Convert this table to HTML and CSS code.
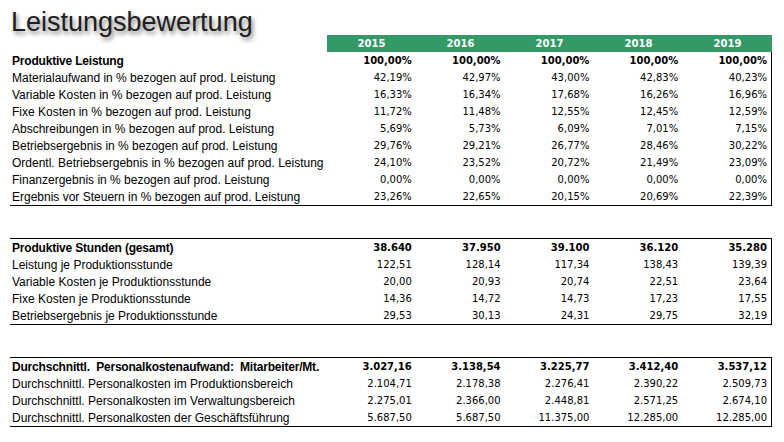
FILE: index.html
```html
<!DOCTYPE html>
<html lang="de">
<head>
<meta charset="utf-8">
<title>Leistungsbewertung</title>
<link rel="stylesheet" href="styles.css">
</head>
<body>
<h1 class="title">Leistungsbewertung</h1>
<div class="sheet">
  <div class="row head">
    <div class="lbl"></div>
    <div class="yr">2015</div><div class="yr">2016</div><div class="yr">2017</div><div class="yr">2018</div><div class="yr">2019</div>
  </div>
  <div class="block">
    <div class="row strong"><div class="lbl">Produktive Leistung</div><div class="num">100,00%</div><div class="num">100,00%</div><div class="num">100,00%</div><div class="num">100,00%</div><div class="num">100,00%</div></div>
    <div class="row"><div class="lbl">Materialaufwand in % bezogen auf prod. Leistung</div><div class="num">42,19%</div><div class="num">42,97%</div><div class="num">43,00%</div><div class="num">42,83%</div><div class="num">40,23%</div></div>
    <div class="row"><div class="lbl">Variable Kosten in % bezogen auf prod. Leistung</div><div class="num">16,33%</div><div class="num">16,34%</div><div class="num">17,68%</div><div class="num">16,26%</div><div class="num">16,96%</div></div>
    <div class="row"><div class="lbl">Fixe Kosten in % bezogen auf prod. Leistung</div><div class="num">11,72%</div><div class="num">11,48%</div><div class="num">12,55%</div><div class="num">12,45%</div><div class="num">12,59%</div></div>
    <div class="row"><div class="lbl">Abschreibungen in % bezogen auf prod. Leistung</div><div class="num">5,69%</div><div class="num">5,73%</div><div class="num">6,09%</div><div class="num">7,01%</div><div class="num">7,15%</div></div>
    <div class="row"><div class="lbl">Betriebsergebnis in % bezogen auf prod. Leistung</div><div class="num">29,76%</div><div class="num">29,21%</div><div class="num">26,77%</div><div class="num">28,46%</div><div class="num">30,22%</div></div>
    <div class="row"><div class="lbl">Ordentl. Betriebsergebnis in % bezogen auf prod. Leistung</div><div class="num">24,10%</div><div class="num">23,52%</div><div class="num">20,72%</div><div class="num">21,49%</div><div class="num">23,09%</div></div>
    <div class="row"><div class="lbl">Finanzergebnis in % bezogen auf prod. Leistung</div><div class="num">0,00%</div><div class="num">0,00%</div><div class="num">0,00%</div><div class="num">0,00%</div><div class="num">0,00%</div></div>
    <div class="row"><div class="lbl">Ergebnis vor Steuern in % bezogen auf prod. Leistung</div><div class="num">23,26%</div><div class="num">22,65%</div><div class="num">20,15%</div><div class="num">20,69%</div><div class="num">22,39%</div></div>
  </div>

  <div class="block boxed">
    <div class="row strong"><div class="lbl">Produktive Stunden (gesamt)</div><div class="num">38.640</div><div class="num">37.950</div><div class="num">39.100</div><div class="num">36.120</div><div class="num">35.280</div></div>
    <div class="row"><div class="lbl">Leistung je Produktionsstunde</div><div class="num">122,51</div><div class="num">128,14</div><div class="num">117,34</div><div class="num">138,43</div><div class="num">139,39</div></div>
    <div class="row"><div class="lbl">Variable Kosten je Produktionsstunde</div><div class="num">20,00</div><div class="num">20,93</div><div class="num">20,74</div><div class="num">22,51</div><div class="num">23,64</div></div>
    <div class="row"><div class="lbl">Fixe Kosten je Produktionsstunde</div><div class="num">14,36</div><div class="num">14,72</div><div class="num">14,73</div><div class="num">17,23</div><div class="num">17,55</div></div>
    <div class="row"><div class="lbl">Betriebsergebnis je Produktionsstunde</div><div class="num">29,53</div><div class="num">30,13</div><div class="num">24,31</div><div class="num">29,75</div><div class="num">32,19</div></div>
  </div>

  <div class="block boxed">
    <div class="row strong"><div class="lbl">Durchschnittl.  Personalkostenaufwand:  Mitarbeiter/Mt.</div><div class="num">3.027,16</div><div class="num">3.138,54</div><div class="num">3.225,77</div><div class="num">3.412,40</div><div class="num">3.537,12</div></div>
    <div class="row"><div class="lbl">Durchschnittl. Personalkosten im Produktionsbereich</div><div class="num">2.104,71</div><div class="num">2.178,38</div><div class="num">2.276,41</div><div class="num">2.390,22</div><div class="num">2.509,73</div></div>
    <div class="row"><div class="lbl">Durchschnittl. Personalkosten im Verwaltungsbereich</div><div class="num">2.275,01</div><div class="num">2.366,00</div><div class="num">2.448,81</div><div class="num">2.571,25</div><div class="num">2.674,10</div></div>
    <div class="row"><div class="lbl">Durchschnittl. Personalkosten der Geschäftsführung</div><div class="num">5.687,50</div><div class="num">5.687,50</div><div class="num">11.375,00</div><div class="num">12.285,00</div><div class="num">12.285,00</div></div>
  </div>
</div>
</body>
</html>
```

FILE: styles.css
```css
html, body {
  margin: 0;
  padding: 0;
  background: #ffffff;
}

body {
  font-family: "Liberation Sans", Arial, sans-serif;
  color: #000000;
  width: 784px;
  height: 442px;
  overflow: hidden;
}

.title {
  margin: 0;
  padding: 9px 0 0 11px;
  height: 26px;
  font-family: "Liberation Sans", Arial, sans-serif;
  font-size: 27px;
  font-weight: 400;
  line-height: 26px;
  color: #202020;
  text-shadow: 2px 3px 4px rgba(0, 0, 0, 0.5);
}

.sheet {
  margin-left: 10px;
  width: 762px;
}

.row {
  display: grid;
  grid-template-columns: 317px repeat(5, 1fr);
  height: 17px;
  line-height: 18px;
  white-space: pre;
}

.head .yr {
  background: #339966;
  color: #ffffff;
  font-family: "DejaVu Sans", Verdana, sans-serif;
  font-weight: 700;
  font-size: 10px;
  line-height: 17px;
  text-align: center;
}

.block {
  box-sizing: border-box;
  width: 762px;
  border-right: 1px solid #000000;
  border-bottom: 1px solid #000000;
}

.block.boxed {
  border-top: 1px solid #000000;
  margin-top: 32px;
}

.lbl {
  padding-left: 2px;
  font-size: 12px;
  overflow: hidden;
}

.num {
  font-family: "DejaVu Sans", Verdana, sans-serif;
  font-size: 10px;
  text-align: right;
  padding-right: 4px;
}

.strong .lbl {
  font-weight: 700;
  letter-spacing: -0.2px;
}

.strong .num {
  font-weight: 700;
}
```
